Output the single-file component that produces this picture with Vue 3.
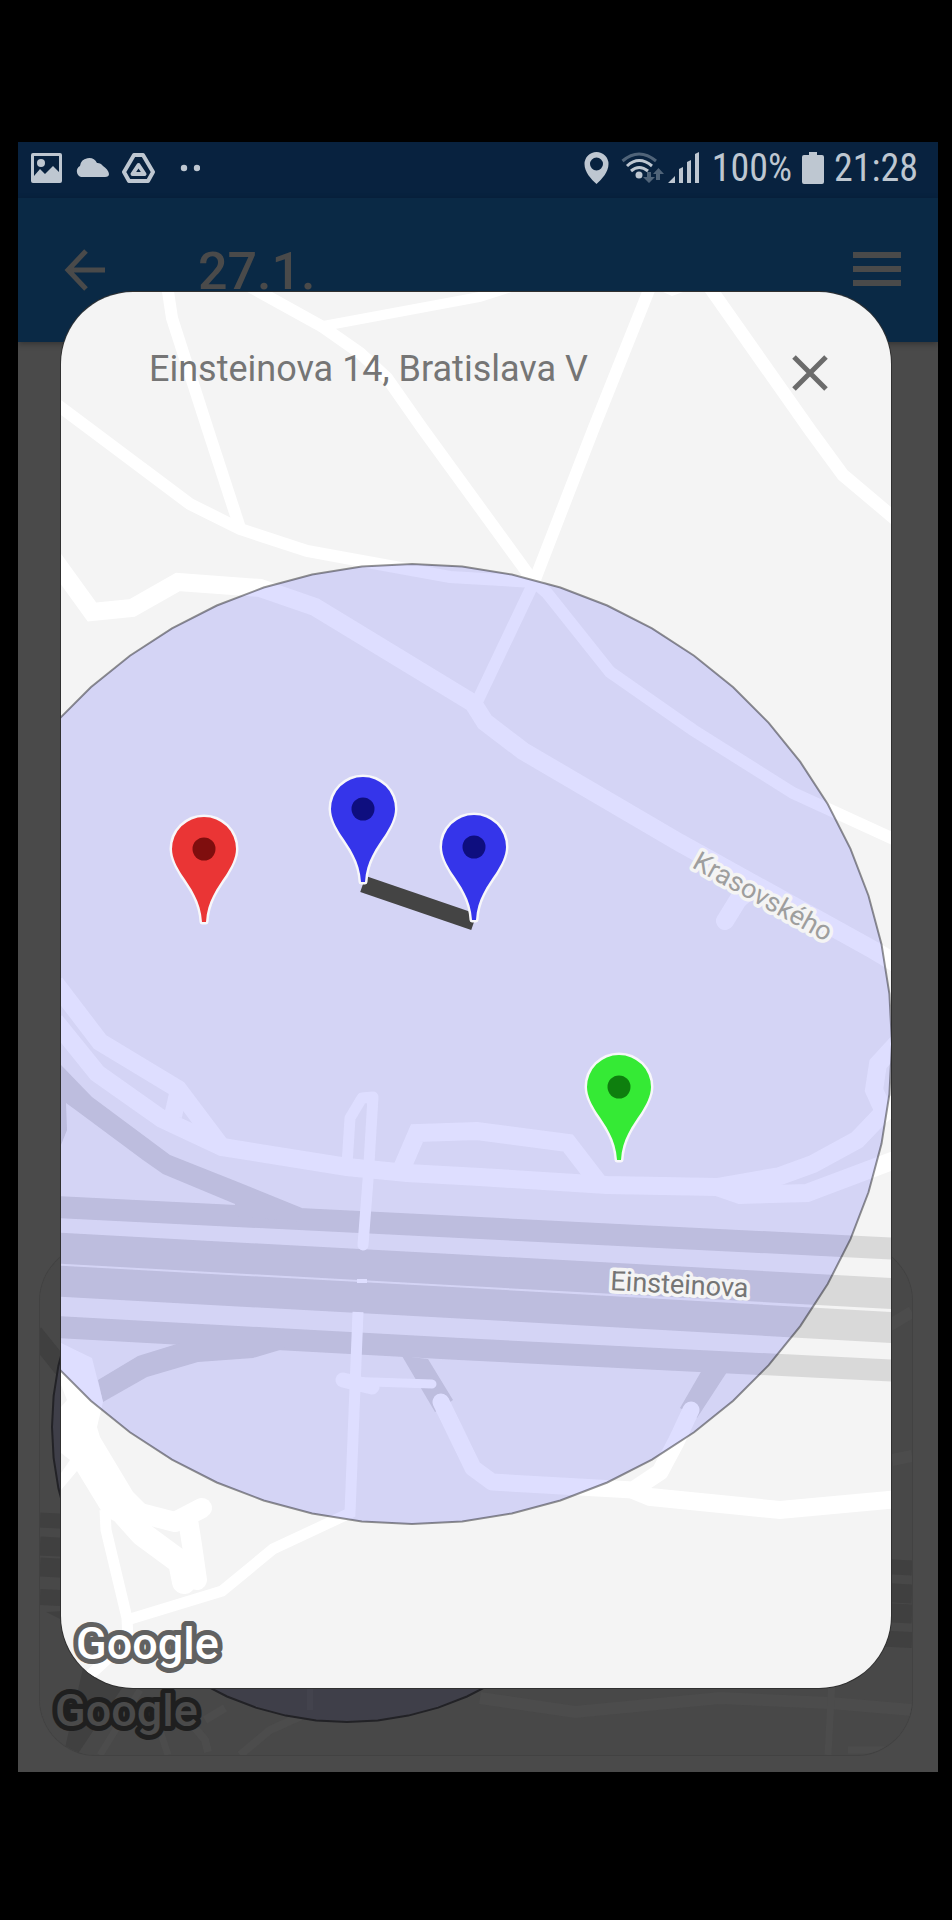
<script setup>
const ring = (cx, cy, r, sides) =>
  Array.from({ length: sides }, (_, i) => {
    const a = (i / sides) * Math.PI * 2
    return `${(cx + r * Math.sin(a)).toFixed(1)},${(cy - r * Math.cos(a)).toFixed(1)}`
  }).join(' ')

const radius = ring(412, 1044, 480, 60)
const previewRadius = ring(347, 1427, 295, 60)

const pins = [
  { id: 'red', x: 204, y: 849, fill: '#ea3535', dot: '#7f0e0e' },
  { id: 'blue-a', x: 363, y: 809, fill: '#3535ea', dot: '#0e0e7f' },
  { id: 'blue-b', x: 474, y: 847, fill: '#3535ea', dot: '#0e0e7f' },
  { id: 'green', x: 619, y: 1087, fill: '#35ea35', dot: '#0e7f0e' }
]

const highways = [
  { d: 'M55 1207L460 1227L900 1249', w: 22 },
  { d: 'M55 1248L460 1270L900 1294', w: 31 },
  { d: 'M55 1281L460 1303L900 1328', w: 31 },
  { d: 'M55 1327L460 1349L900 1371', w: 22 }
]

const roads = [
  { d: 'M55 403L190 504L240 529L307 551L373 563L450 577L534 582', w: 12 },
  { d: 'M167 285L172 318L208 430L240 528', w: 12 },
  { d: 'M247 285L323 327L360 353L387 378L422 428L534 582L547 593L610 672L693 730L793 793L900 842', w: 12 },
  { d: 'M318 327L480 297L520 284', w: 10 },
  { d: 'M651 285L593 430L534 582L476 704', w: 12 },
  { d: 'M708 285L810 430L843 475L900 523', w: 13 },
  { d: 'M50 554L92 612L132 608L178 582L260 588L315 607L473 703L485 722L523 751L680 843L870 948L900 966', w: 18 },
  { d: 'M55 983L100 1042L178 1089L220 1145', w: 18 },
  { d: 'M55 1021L97 1073L162 1119L222 1147L347 1167L407 1173L480 1177L607 1185L717 1187L780 1176L813 1164L857 1140L880 1116L900 1100', w: 18 },
  { d: 'M179 1090L173 1116', w: 18 },
  { d: 'M717 1187L740 1195L807 1193L900 1158', w: 18 },
  { d: 'M900 1040L878 1064L874 1090L884 1112', w: 18 },
  { d: 'M362 1279L362 1283', w: 10 },
  { d: 'M358 1312L350 1513L273 1549L222 1591L127 1620', w: 11 },
  { d: 'M402 1168L417 1133L477 1131L568 1143L598 1182', w: 18 },
  { d: 'M633 1490L650 1497L780 1510L900 1499', w: 18 },
  { d: 'M105 1510L106 1530L127 1618L128 1640L90 1675', w: 11 }
]

const roundRoads = [
  { d: 'M347 1165L350 1118L362 1098L373 1097L368 1180L363 1245', w: 11 },
  { d: 'M725 921L738 900L752 888', w: 18 },
  { d: 'M441 1402L473 1468L492 1482L633 1490L660 1472L676 1442L691 1410', w: 17 },
  { d: 'M343 1381L432 1384', w: 9 },
  { d: 'M343 1380L372 1387', w: 15 },
  { d: 'M140 1513L175 1522L202 1508', w: 20 },
  { d: 'M188 1520L192 1545L197 1580', w: 20 },
  { d: 'M116 1505L142 1534L180 1562L184 1582', w: 24 }
]
</script>

<template>
  <div class="stage">
    <div class="phone">
      <div class="app">
        <div class="status">
          <div class="notifications">
            <svg width="31" height="31" viewBox="0 0 31 31" aria-hidden="true">
              <path fill="currentColor" fill-rule="evenodd" d="M2 0H29Q31 0 31 2V28Q31 30 29 30H2Q0 30 0 28V2Q0 0 2 0ZM3 3V23L9 16L14 21L22 13L28 19V3Z" />
              <circle cx="10" cy="10" r="4" fill="currentColor" />
            </svg>
            <svg class="cloud" width="34" height="31" viewBox="0 0 34 31" aria-hidden="true">
              <path fill="currentColor" d="M6 24A6 6 0 0 1 5 13A9 9 0 0 1 22 10A7 7 0 0 1 28 13Q33 16 34 21Q34 24 30 24Z" />
            </svg>
            <svg width="33" height="31" viewBox="0 0 33 31" aria-hidden="true">
              <path fill="none" stroke="currentColor" stroke-width="4" stroke-linejoin="round" d="M12 2H21L31 19L26 28H7L2 19Z" />
              <path fill="none" stroke="currentColor" stroke-width="4" stroke-linejoin="round" d="M16.500 12L22.500 21H10.500Z" />
            </svg>
            <svg class="more" width="20" height="31" viewBox="0 0 20 31" aria-hidden="true">
              <circle cx="4" cy="15" r="3.200" fill="currentColor" />
              <circle cx="17" cy="15" r="3.200" fill="currentColor" />
            </svg>
          </div>
          <div class="system">
            <svg width="25" height="32" viewBox="0 0 25 32" aria-hidden="true">
              <path fill="currentColor" fill-rule="evenodd" d="M12.500 0A12 12 0 0 1 24.500 12C24.500 20 18 27 12.500 32C7 27 .5 20 .5 12A12 12 0 0 1 12.500 0ZM12.500 5.500A6.500 6.500 0 1 0 12.500 18.500A6.500 6.500 0 1 0 12.500 5.500Z" />
            </svg>
            <svg class="wifi" width="43" height="32" viewBox="0 0 43 32" aria-hidden="true">
              <g fill="none" stroke="currentColor" stroke-width="3">
                <path opacity=".4" d="M1.500 9Q18 -5 35 9" />
                <path d="M6 14Q18 3 31 14" />
                <path d="M10 19Q18 12 27 19" />
              </g>
              <circle cx="18" cy="23" r="3.500" fill="currentColor" />
              <path opacity=".4" fill="currentColor" d="M26 20H30V25H34L28 31L22 25H26ZM35 28V22H32L37.500 16L43 22H39V28Z" />
            </svg>
            <svg class="signal" width="32" height="32" viewBox="0 0 32 32" aria-hidden="true">
              <path fill="currentColor" d="M0 31L7 24V31ZM11 17L15 15V31H11ZM19 10L23 8V31H19ZM27 2L31 0V31H27Z" />
            </svg>
            <span class="reading">100%</span>
            <svg class="battery" width="22" height="32" viewBox="0 0 22 32" aria-hidden="true">
              <path fill="currentColor" d="M7 0H15V3H20Q22 3 22 5V30Q22 32 20 32H2Q0 32 0 30V5Q0 3 2 3H7Z" />
            </svg>
            <span class="reading time">21:28</span>
          </div>
        </div>

        <header class="bar">
          <button class="icon" type="button" aria-label="Back">
            <svg width="42" height="42" viewBox="0 0 42 42"><path fill="none" stroke="currentColor" stroke-width="5" d="M22 2L4 21L22 40M4 21H41" /></svg>
          </button>
          <h1>27.1.</h1>
          <button class="icon" type="button" aria-label="Menu">
            <svg width="48" height="42" viewBox="0 0 48 42"><path stroke="currentColor" stroke-width="6" d="M0 6H48M0 20H48M0 34H48" /></svg>
          </button>
        </header>

        <main class="content">
          <div class="preview">
            <svg viewBox="40 1245 872 510" aria-hidden="true">
              <rect x="40" y="1245" width="872" height="510" fill="#484848" />
              <g fill="none" stroke="#404040">
                <path stroke-width="15" d="M40 1520L912 1568" />
                <path stroke-width="19" d="M40 1546L912 1594M40 1567L912 1614" />
                <path stroke-width="16" d="M40 1597L912 1640" />
                <path stroke-width="18" d="M34 1333L80 1390" />
              </g>
              <path fill="#404040" d="M83 1668L122 1688L77 1755L65 1748ZM46 1612L62 1611V1620Z" />
              <g fill="none" stroke="#4c4c4c">
                <path stroke-width="12" d="M480 1698L575 1712L720 1698L830 1703L912 1710M885 1328L912 1312M892 1460L912 1456" />
                <path stroke-width="7" d="M832 1680L828 1755M150 1700L168 1755M100 1755L140 1690M848 1750H890" />
                <path stroke-width="8" d="M240 1755L270 1730L310 1712M180 1710L205 1740L208 1752M205 1720L225 1708" />
              </g>
              <polygon :points="previewRadius" fill="#3f3f49" stroke="#222226" stroke-width="2" />
              <path fill="none" stroke="#43434d" stroke-width="6" d="M310 1680V1710" />
              <text class="google google-dim" x="55" y="1726">Google</text>
            </svg>
          </div>
        </main>
      </div>

      <div class="overlay">
        <section class="dialog" role="dialog" aria-labelledby="place">
          <svg class="map" viewBox="61 292 830 1396" preserveAspectRatio="xMidYMid slice" role="img" aria-label="Map">
            <rect x="61" y="292" width="830" height="1396" fill="#f4f4f4" />
            <g fill="none" stroke="#d9d9d9">
              <path v-for="h in highways" :key="h.d" :d="h.d" :stroke-width="h.w" />
            </g>
            <path fill="#d9d9d9" d="M61 1065L92 1097L170 1155L233 1180L302 1208V1222L235 1216V1204L163 1174L143 1160L77 1111L66 1103L67 1130L61 1145ZM98 1380L138 1356L180 1343L290 1343L280 1350L253 1358L198 1362L147 1377L103 1402ZM402 1356L428 1359L453 1400L435 1412ZM702 1370L727 1372L697 1418L680 1408Z" />
            <g fill="none" stroke="#fff">
              <path v-for="r in roads" :key="r.d" :d="r.d" :stroke-width="r.w" />
            </g>
            <g fill="none" stroke="#fff" stroke-linecap="round" stroke-linejoin="round">
              <path v-for="r in roundRoads" :key="r.d" :d="r.d" :stroke-width="r.w" />
            </g>
            <path fill="#fff" d="M663 292L672 296L683 292ZM61 1343L92 1358L103 1402L97 1427L100 1437L133 1492L155 1514L140 1530L112 1520L102 1512L77 1471L61 1490Z" />
            <path fill="#f4f4f4" d="M61 1385L67 1400L61 1407ZM61 1453L70 1460L61 1473Z" />
            <polygon :points="radius" fill="#00f" fill-opacity=".13" stroke="#000" stroke-opacity=".42" stroke-width="2" />

            <text class="street street-minor" transform="translate(691 867) rotate(29)">Krasovského</text>
            <text class="street" transform="translate(610 1290) rotate(3)">Einsteinova</text>

            <path d="M363 884L474 922" stroke="#444" stroke-width="17" />
            <g v-for="p in pins" :key="p.id" :transform="`translate(${p.x} ${p.y})`">
              <path
                :fill="p.fill"
                class="pin"
                d="M-32 0A32 32 0 0 1 32 0C32 9 27 18 22 26C14 38 3 52 2 73H-2C-3 52 -14 38 -22 26C-27 18 -32 9 -32 0Z"
              />
              <circle r="11.500" :fill="p.dot" />
            </g>
            <text class="google" x="76" y="1659">Google</text>
          </svg>
          <div class="heading">
            <h2 id="place">Einsteinova 14, Bratislava V</h2>
            <button class="close" type="button" aria-label="Close">
              <svg width="36" height="36" viewBox="0 0 36 36"><path stroke="currentColor" stroke-width="5" d="M2 2L34 34M34 2L2 34" /></svg>
            </button>
          </div>
        </section>
      </div>
    </div>
  </div>
</template>

<style>
body {
  background: #000;
}
</style>

<style scoped>
.stage {
  box-sizing: border-box;
  min-height: 100vh;
  padding: 142px 14px 148px 18px;
  background: #000;
  font-family: Roboto, "Liberation Sans", sans-serif;
}
.phone {
  display: grid;
}
.app,
.overlay {
  grid-area: 1 / 1;
  min-width: 0;
}
.app {
  display: flex;
  flex-direction: column;
  background: #4a4a4a;
}
.status {
  display: flex;
  justify-content: space-between;
  align-items: center;
  height: 56px;
  padding: 0 20px 4px 13px;
  box-sizing: border-box;
  background: #08223f;
  color: #bec7d1;
}
.notifications,
.system {
  display: flex;
  align-items: center;
}
.notifications {
  gap: 13px;
}
.more {
  margin-left: 12px;
}
.wifi {
  margin-left: 12px;
}
.signal {
  margin-left: 4px;
}
.battery {
  margin: 0 10px;
}
.reading {
  font-family: "Roboto Condensed", "Liberation Sans Narrow", Roboto, sans-serif;
  font-size: 38px;
  line-height: 44px;
}
.signal + .reading {
  margin-left: 12px;
}
.bar {
  display: flex;
  align-items: center;
  height: 144px;
  padding: 0 37px 0 46px;
  box-sizing: border-box;
  background: #0a2945;
  color: #4a4a4a;
  box-shadow: 0 2px 6px rgba(0, 0, 0, 0.3);
}
.bar h1 {
  flex: 1;
  margin: 0 0 0 92px;
  padding-top: 4px;
  font-size: 52px;
  line-height: 60px;
  font-weight: 500;
}
.icon,
.close {
  padding: 0;
  border: 0;
  background: none;
  color: inherit;
}
.icon svg,
.close svg {
  display: block;
}
.content {
  flex: 1;
  display: flex;
  flex-direction: column;
  justify-content: flex-end;
  padding: 0 26px 17px 22px;
}
.preview {
  overflow: hidden;
  border-radius: 56px;
  box-shadow: 0 0 0 1px #424242;
}
.preview svg,
.map {
  display: block;
  width: 100%;
}
.overlay {
  padding: 150px 47px 84px 43px;
}
.dialog {
  display: grid;
  overflow: hidden;
  border-radius: 72px;
  box-shadow: 0 0 0 1px #303030;
}
.map,
.heading {
  grid-area: 1 / 1;
}
.heading {
  display: flex;
  justify-content: space-between;
  align-items: flex-start;
  padding: 48px 63px 0 88px;
  color: #757575;
}
.heading h2 {
  margin: 0;
  font-size: 36px;
  line-height: 58px;
  font-weight: 400;
}
.close {
  height: 66px;
  color: #6b6b6b;
}
.pin {
  stroke: #f7f7fa;
  stroke-width: 5px;
  stroke-linejoin: round;
  paint-order: stroke;
}
.street {
  font-size: 27px;
  fill: #757575;
  stroke: #f4f4f4;
  stroke-width: 7px;
  stroke-linejoin: round;
  paint-order: stroke;
}
.street-minor {
  fill: #9e9e9e;
}
.google {
  font-family: Roboto, sans-serif;
  font-size: 45px;
  font-weight: 500;
  fill: #fff;
  stroke: #616161;
  stroke-width: 10px;
  stroke-linejoin: round;
  paint-order: stroke;
}
.google-dim {
  fill: #4a4a4a;
  stroke: #1f1f1f;
}
</style>
